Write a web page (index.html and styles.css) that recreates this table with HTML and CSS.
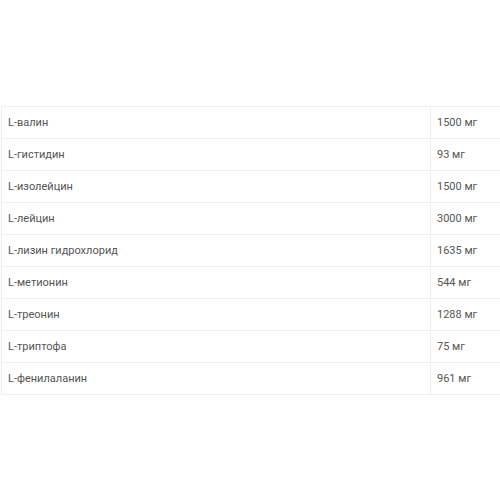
FILE: index.html
```html
<!DOCTYPE html>
<html lang="ru">
<head>
<meta charset="utf-8">
<link rel="stylesheet" href="styles.css">
</head>
<body>
<div class="wrap">
<table class="comp">
<tbody>
<tr><td class="name">L-валин</td><td class="val">1500 мг</td></tr>
<tr><td class="name">L-гистидин</td><td class="val">93 мг</td></tr>
<tr><td class="name">L-изолейцин</td><td class="val">1500 мг</td></tr>
<tr><td class="name">L-лейцин</td><td class="val">3000 мг</td></tr>
<tr><td class="name">L-лизин гидрохлорид</td><td class="val">1635 мг</td></tr>
<tr><td class="name">L-метионин</td><td class="val">544 мг</td></tr>
<tr><td class="name">L-треонин</td><td class="val">1288 мг</td></tr>
<tr><td class="name">L-триптофа</td><td class="val">75 мг</td></tr>
<tr><td class="name">L-фенилаланин</td><td class="val">961 мг</td></tr>
</tbody>
</table>
</div>
</body>
</html>
```
FILE: styles.css
```css
html, body {
  margin: 0;
  padding: 0;
  background: #fff;
}
.wrap {
  padding-top: 106px;
  padding-left: 1px;
}
.comp {
  border-collapse: collapse;
  width: 520px;
  font-family: Roboto, "Noto Sans", sans-serif;
  font-size: 11px;
  color: #555;
}
.comp td {
  height: 31px;
  padding: 0 6px;
  border-top: 1px solid #eef0f0;
  border-bottom: 1px solid #eef0f0;
  vertical-align: middle;
}
.comp .name {
  width: 416px;
  border-left: 1px solid #eef0f0;
}
.comp .val {
  border-left: 1px solid #eef0f0;
}
```
